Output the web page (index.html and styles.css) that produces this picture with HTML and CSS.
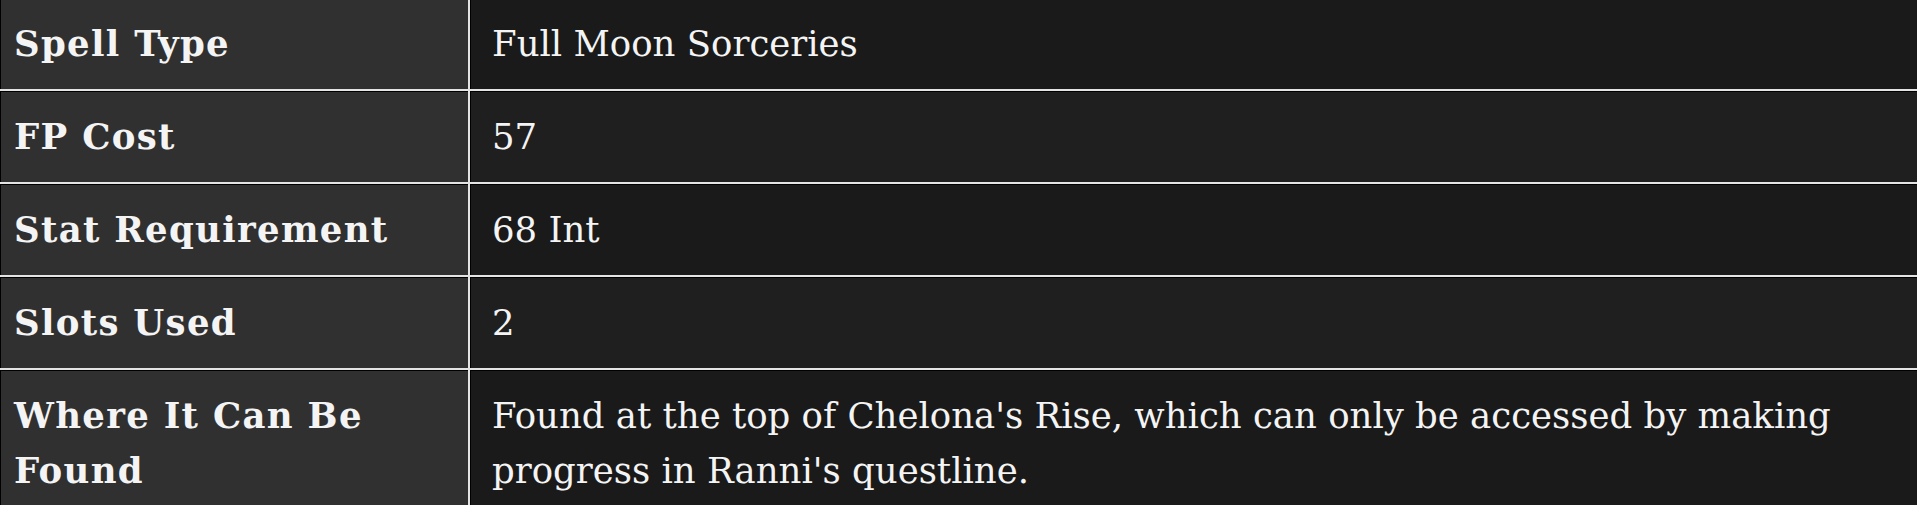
FILE: index.html
```html
<!DOCTYPE html>
<html lang="en">
<head>
<meta charset="utf-8">
<title>Spell details</title>
<link rel="stylesheet" href="styles.css">
</head>
<body>
<table class="spec">
  <tbody>
    <tr class="row odd">
      <th class="key">Spell Type</th>
      <td class="val">Full Moon Sorceries</td>
    </tr>
    <tr class="row even">
      <th class="key">FP Cost</th>
      <td class="val">57</td>
    </tr>
    <tr class="row odd">
      <th class="key">Stat Requirement</th>
      <td class="val">68 Int</td>
    </tr>
    <tr class="row even">
      <th class="key">Slots Used</th>
      <td class="val">2</td>
    </tr>
    <tr class="row odd">
      <th class="key">Where It Can Be Found</th>
      <td class="val">Found at the top of Chelona's Rise, which can only be accessed by making progress in Ranni's questline.</td>
    </tr>
  </tbody>
</table>
</body>
</html>
```
FILE: styles.css
```css
html, body {
  margin: 0;
  padding: 0;
  background: #1a1a1a;
}

.spec {
  width: 100%;
  margin-top: -4px;
  border-collapse: collapse;
  font-family: "DejaVu Serif", "Liberation Serif", serif;
  font-size: 35.5px;
  line-height: 55px;
  color: #f4f4f4;
  table-layout: fixed;
}

.key,
.val {
  border: 2px solid #e4e4e4;
  padding: 18px 20px 18px 14px;
  text-align: left;
  vertical-align: top;
  box-shadow: inset 0 1px 0 #000, inset 1px 0 0 #000;
}

.key {
  width: 434px;
  background: #303030;
  font-weight: bold;
  letter-spacing: 1.3px;
  border-left: none;
}

.val {
  padding-left: 22px;
  font-weight: normal;
  border-right: none;
}

.odd .val {
  background: #1a1a1a;
}

.even .val {
  background: #1f1f1f;
}
```
